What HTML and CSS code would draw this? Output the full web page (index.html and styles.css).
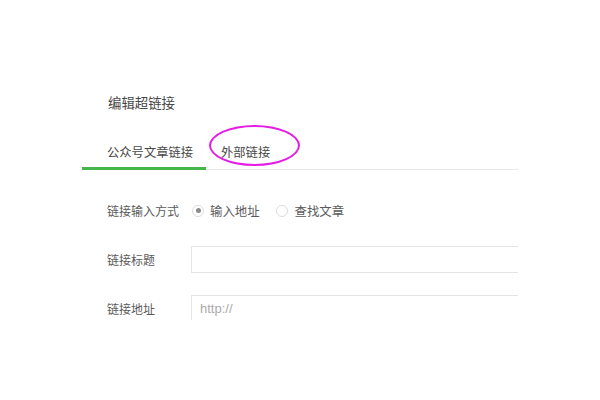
FILE: index.html
```html
<!DOCTYPE html>
<html lang="zh-CN">
<head>
<meta charset="utf-8">
<link rel="stylesheet" href="styles.css">
</head>
<body>
<div class="page">
  <div class="panel">
    <div class="title">编辑超链接</div>
    <div class="tabs">
      <div class="tab active">公众号文章链接</div>
      <div class="tab">外部链接</div>
    </div>
    <div class="form">
      <div class="row">
        <div class="label">链接输入方式</div>
        <div class="radios">
          <span class="radio checked"></span><span class="rtext">输入地址</span>
          <span class="radio"></span><span class="rtext">查找文章</span>
        </div>
      </div>
      <div class="row">
        <div class="label">链接标题</div>
        <div class="input"></div>
      </div>
      <div class="row">
        <div class="label">链接地址</div>
        <div class="input"><span class="ph">http://</span></div>
      </div>
    </div>
  </div>
  <div class="mark"></div>
</div>
</body>
</html>
```

FILE: styles.css
```css
html, body {
  margin: 0;
  padding: 0;
  background: #fff;
}
body {
  font-family: "Noto Sans CJK SC", "Noto Sans", sans-serif;
  color: #555;
}
.page {
  position: relative;
  width: 600px;
  height: 400px;
  padding-top: 92px;
  box-sizing: border-box;
}
.panel {
  margin-left: 82px;
  width: 436px;
  height: 228px;
  overflow: hidden;
}
.title {
  height: 20px;
  line-height: 20px;
  padding-left: 26px;
  font-size: 13.4px;
  color: #484848;
}
.tabs {
  display: flex;
  border-bottom: 1px solid #e8e8e8;
  height: 58px;
  box-sizing: border-box;
}
.tab {
  padding: 30px 0 0 0;
  line-height: 20px;
  font-size: 12.3px;
  color: #484848;
}
.tab.active {
  width: 124px;
  padding-left: 25px;
  box-sizing: border-box;
  border-bottom: 3px solid #44b549;
  margin-bottom: -1px;
}
.tab + .tab {
  margin-left: 15px;
}
.form {
  padding-top: 27px;
  display: flex;
  flex-direction: column;
  gap: 22px;
}
.row {
  display: flex;
  align-items: center;
  height: 27px;
}
.label {
  width: 84px;
  padding-left: 25px;
  flex: none;
  font-size: 12px;
  color: #5a5a5a;
}
.radios {
  display: flex;
  align-items: center;
  padding-left: 1px;
  font-size: 12.4px;
  color: #5a5a5a;
}
.radio {
  width: 12px;
  height: 12px;
  border: 1px solid #dcdcdc;
  border-radius: 50%;
  box-sizing: border-box;
  display: flex;
  align-items: center;
  justify-content: center;
}
.radio.checked::after {
  content: "";
  width: 5px;
  height: 5px;
  border-radius: 50%;
  background: #8a8a8a;
}
.rtext {
  margin-left: 6px;
}
.rtext + .radio {
  margin-left: 16px;
}
.rtext:last-child {
  margin-left: 7px;
}
.input {
  flex: none;
  width: 360px;
  height: 27px;
  border: 1px solid #e5e5e5;
  box-sizing: border-box;
  display: flex;
  align-items: center;
  padding-left: 8px;
}
.ph {
  font-family: "Liberation Sans", "Noto Sans", sans-serif;
  font-size: 13px;
  color: #aaa;
}
.mark {
  position: absolute;
  left: 209px;
  top: 125px;
  width: 91px;
  height: 41px;
  border: 2.5px solid #e31de3;
  border-radius: 50%;
  box-sizing: border-box;
}
```
